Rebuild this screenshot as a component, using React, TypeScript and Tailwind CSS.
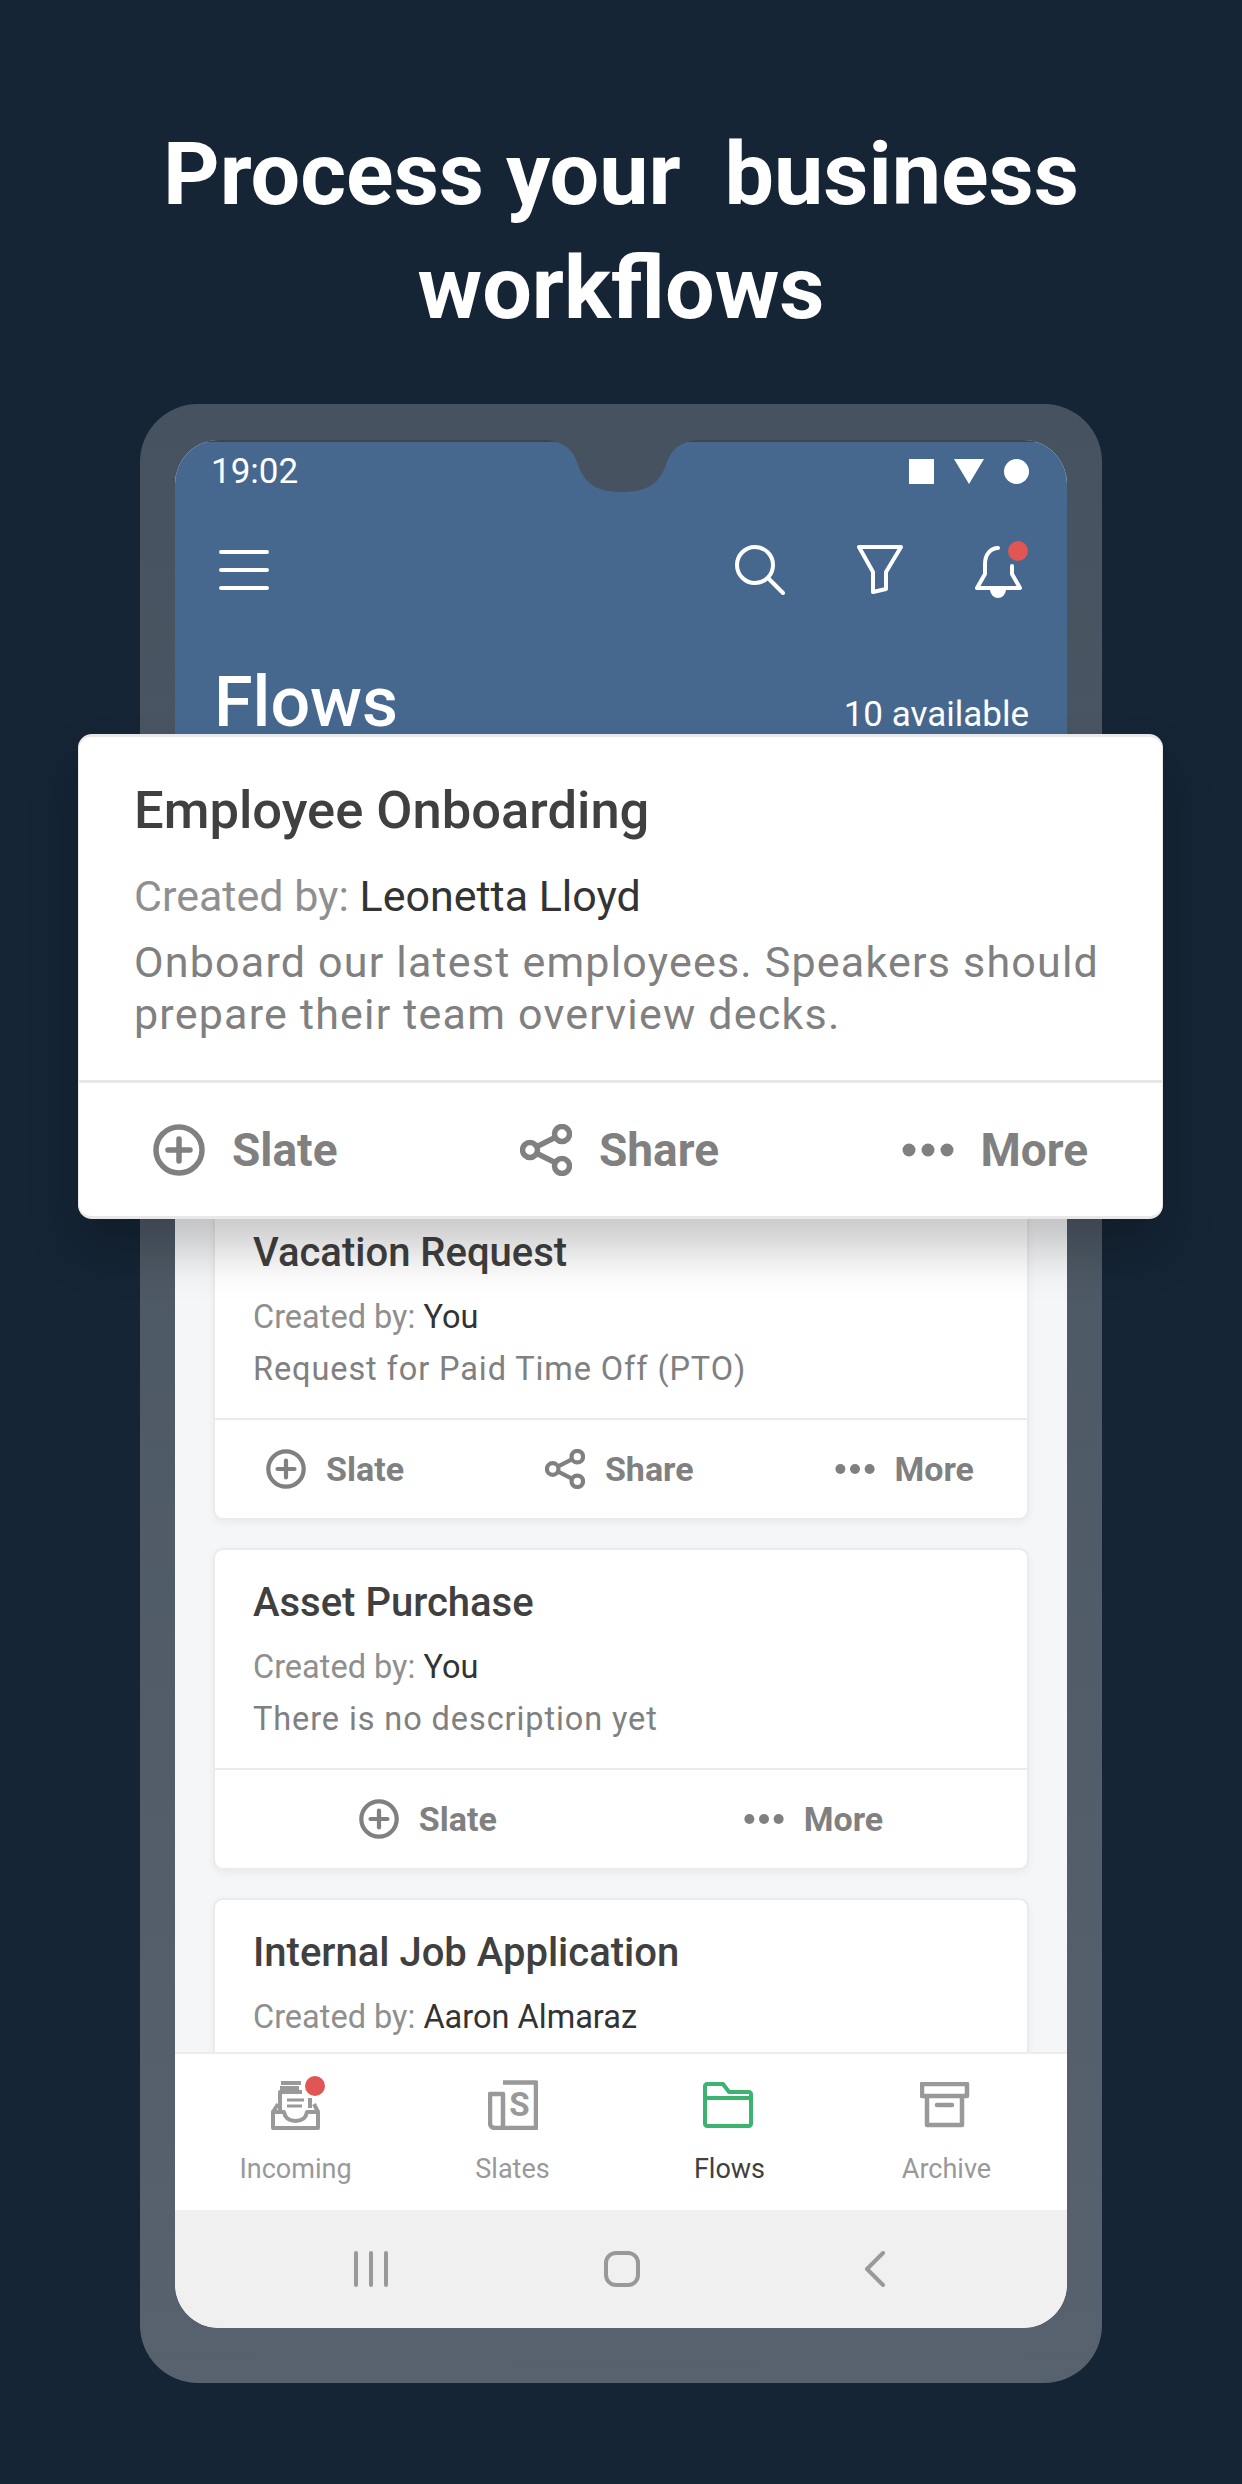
import React from 'react';

const GRAY = '#808080';

const PlusCircleIcon = ({ size }: { size: number }) => (
  <svg width={size} height={size} viewBox="0 0 52 52" fill="none" stroke={GRAY} strokeWidth="5.5" strokeLinecap="round">
    <circle cx="26" cy="26" r="23" />
    <path d="M15 26H37M26 15V37" />
  </svg>
);

const ShareIcon = ({ size }: { size: number }) => (
  <svg width={size} height={size} viewBox="0 0 52 52" fill="none" stroke={GRAY} strokeWidth="5.5">
    <circle cx="10" cy="26" r="7.5" />
    <circle cx="42" cy="10" r="7.5" />
    <circle cx="42" cy="42" r="7.5" />
    <path d="M17 22.5L35 13.5M17 29.5L35 38.5" />
  </svg>
);

const DotsIcon = ({ size }: { size: number }) => (
  <svg width={size} height={size} viewBox="0 0 52 52" fill={GRAY}>
    <circle cx="7" cy="26" r="6.5" />
    <circle cx="26" cy="26" r="6.5" />
    <circle cx="45" cy="26" r="6.5" />
  </svg>
);

const Action = ({ icon, label, big }: { icon: React.ReactNode; label: string; big?: boolean }) => (
  <div className={big ? 'flex items-center gap-[27px]' : 'flex items-center gap-[20px]'}>
    {icon}
    <span className={big ? 'text-[46px] leading-[52px] font-bold text-[#808080]' : 'text-[34px] leading-[40px] font-bold text-[#808080]'}>
      {label}
    </span>
  </div>
);

interface FlowCardProps {
  title: string;
  author: string;
  description?: string;
  actions?: 'all' | 'noShare' | 'none';
}

const FlowCard = ({ title, author, description, actions = 'all' }: FlowCardProps) => (
  <div className="h-[322px] shrink-0 rounded-[10px] bg-white border-2 border-[#ebebeb] shadow-[0_3px_8px_rgba(0,0,0,0.05)] flex flex-col">
    <div className="h-[220px] shrink-0 px-[38px] pt-[28px] border-b-2 border-[#ebebeb]">
      <div className="text-[40px] leading-[50px] font-medium text-[#404040]">{title}</div>
      <div className="mt-[19px] text-[32.5px] leading-[40px] text-[#8f8f8f]">
        Created by: <span className="text-[#333333]">{author}</span>
      </div>
      {description && (
        <div className="mt-[12px] text-[32.5px] leading-[40px] text-[#808080] tracking-[0.9px]">{description}</div>
      )}
    </div>
    {actions === 'all' && (
      <div className="flex-1 flex items-center justify-between pl-[51px] pr-[53px]">
        <Action icon={<PlusCircleIcon size={40} />} label="Slate" />
        <Action icon={<ShareIcon size={40} />} label="Share" />
        <Action icon={<DotsIcon size={40} />} label="More" />
      </div>
    )}
    {actions === 'noShare' && (
      <div className="flex-1 flex items-center justify-center gap-[247px]">
        <Action icon={<PlusCircleIcon size={40} />} label="Slate" />
        <Action icon={<DotsIcon size={40} />} label="More" />
      </div>
    )}
  </div>
);

const IncomingIcon = () => (
  <svg width="50" height="50" viewBox="0 0 50 50" fill="none" stroke="#999999" strokeWidth="4" strokeLinejoin="round" overflow="visible">
    <path d="M2 32L7 24M47 32L43 24" />
    <path d="M2 32H13C14 38 18 41 24.5 41C31 41 35 38 36 32H47V48H2Z" />
    <path d="M9 30V12H31" />
    <path d="M10 3H30M9 8H28M39 18V28" />
    <path d="M16 20H33M16 26H31" strokeWidth="3" />
    <circle cx="44" cy="6" r="10" fill="#e25555" stroke="none" />
  </svg>
);

const SlatesIcon = () => (
  <svg width="50" height="50" viewBox="0 0 50 50" fill="none" stroke="#999999" strokeWidth="4.5" strokeLinejoin="round">
    <path d="M15 2.5H48V48H7C4 48 2 46 2 43V14H15V48" />
    <text x="31.5" y="36" textAnchor="middle" fontFamily="Roboto, sans-serif" fontSize="33" fontWeight="700" fill="#999999" stroke="none">S</text>
  </svg>
);

const FlowsIcon = () => (
  <svg width="50" height="46" viewBox="0 0 50 46" fill="none" stroke="#3cb371" strokeWidth="4" strokeLinejoin="round">
    <path d="M2 4C2 3 3 2 4 2H20L26 10H46C47 10 48 11 48 12V42C48 43 47 44 46 44H4C3 44 2 43 2 42Z" />
    <path d="M2 16H48" />
  </svg>
);

const ArchiveIcon = () => (
  <svg width="50" height="46" viewBox="0 0 50 46" fill="none" stroke="#999999" strokeWidth="4.5" strokeLinejoin="round">
    <path d="M2 2H47V14H2Z" />
    <path d="M7 14V43H42V14" />
    <path d="M17 23H32" strokeLinecap="round" />
  </svg>
);

const tabs = [
  { label: 'Incoming', icon: <IncomingIcon />, iconBox: 'h-[50px] flex items-center justify-center' },
  { label: 'Slates', icon: <SlatesIcon />, iconBox: 'h-[50px] flex items-center justify-center' },
  { label: 'Flows', icon: <FlowsIcon />, iconBox: 'h-[50px] flex items-center justify-center pr-[4px]', active: true },
  { label: 'Archive', icon: <ArchiveIcon />, iconBox: 'h-[50px] flex items-center justify-center pr-[4px]' },
];

export default function App() {
  return (
    <div className="w-[1242px] h-[2484px] bg-[#152536] flex flex-col items-center overflow-hidden font-['Roboto',sans-serif]">
      <h1 className="mt-[117px] text-center text-[88px] leading-[114px] font-bold text-white whitespace-pre">
        {'Process your  business\nworkflows'}
      </h1>

      {/* Phone */}
      <div className="relative mt-[59px] w-[962px] h-[1979px] shrink-0 rounded-[58px] bg-gradient-to-b from-[#46525f] to-[#58626e] px-[35px] pt-[36px]">
        <div className="relative h-[1888px] rounded-[44px] overflow-hidden bg-[#f5f6f8] flex flex-col">
          {/* Header */}
          <div className="h-[360px] shrink-0 bg-[#46688f] border-t-2 border-[#3f4448] text-white">
            <div className="h-[58px] pl-[36px] pr-[38px] flex items-center justify-between">
              <span className="text-[35px] leading-[40px] mt-[2px]">19:02</span>
              <div className="flex items-center">
                <div className="w-[25px] h-[25px] bg-white" />
                <svg width="30" height="25" viewBox="0 0 30 25" className="ml-[20px]" fill="white">
                  <path d="M0 0H30L15 25Z" />
                </svg>
                <div className="ml-[20px] w-[25px] h-[25px] rounded-full bg-white" />
              </div>
            </div>

            <div className="mt-[40px] h-[60px] pl-[44px] pr-[38px] flex items-center justify-between">
              <svg width="50" height="42" viewBox="0 0 50 42" stroke="white" strokeWidth="4" strokeLinecap="round">
                <path d="M2 3H48M2 21H48M2 39H48" />
              </svg>
              <div className="flex items-center gap-[72px]">
                <svg width="50" height="50" viewBox="0 0 50 50" fill="none" stroke="white" strokeWidth="4" strokeLinecap="round">
                  <circle cx="20" cy="20" r="18" />
                  <path d="M33 33L48 48" />
                </svg>
                <svg width="46" height="50" viewBox="0 0 46 50" fill="none" stroke="white" strokeWidth="4" strokeLinejoin="round">
                  <path d="M2 2H44L29 27V44L16 47V27Z" />
                </svg>
                <svg width="54" height="60" viewBox="0 0 54 60" fill="none" stroke="white" strokeWidth="4" strokeLinejoin="round" strokeLinecap="round">
                  <path d="M23 8C16 8 10 14 10 24V34L2 48H45L37 34V26" />
                  <path d="M17 50C18 58 28 58 29 50" fill="white" />
                  <circle cx="43" cy="11" r="10" fill="#e25555" stroke="none" />
                </svg>
              </div>
            </div>

            <div className="mt-[64px] pl-[39px] pr-[38px] flex items-baseline justify-between">
              <span className="text-[70px] leading-[76px] font-medium">Flows</span>
              <span className="text-[35px] leading-[40px]">10 available</span>
            </div>
          </div>

          {/* List */}
          <div className="flex-1 min-h-0 overflow-hidden px-[38px] pt-[398px] flex flex-col gap-[28px]">
            <FlowCard title="Vacation Request" author="You" description="Request for Paid Time Off (PTO)" />
            <FlowCard title="Asset Purchase" author="You" description="There is no description yet" actions="noShare" />
            <FlowCard title="Internal Job Application" author="Aaron Almaraz" actions="none" />
          </div>

          {/* Tabs */}
          <div className="h-[158px] shrink-0 bg-white border-t-2 border-[#ececec] px-[12px] grid grid-cols-4 z-10">
            {tabs.map((tab) => (
              <div key={tab.label} className="flex flex-col items-center pt-[26px]">
                <div className={tab.iconBox}>{tab.icon}</div>
                <span className={tab.active ? 'mt-[23px] text-[27px] leading-[32px] text-[#404040]' : 'mt-[23px] text-[27px] leading-[32px] text-[#999999]'}>
                  {tab.label}
                </span>
              </div>
            ))}
          </div>

          {/* System nav */}
          <div className="h-[118px] shrink-0 bg-[#f0f0f0] flex items-center justify-center pr-[4px]">
            <svg width="36" height="36" viewBox="0 0 36 36" stroke="#999999" strokeWidth="4" strokeLinecap="round">
              <path d="M3 2V34M18 2V34M33 2V34" />
            </svg>
            <svg width="36" height="36" viewBox="0 0 36 36" className="ml-[215px]" fill="none" stroke="#999999" strokeWidth="4">
              <rect x="2" y="2" width="32" height="32" rx="10" />
            </svg>
            <svg width="22" height="36" viewBox="0 0 22 36" className="ml-[224px]" fill="none" stroke="#999999" strokeWidth="4" strokeLinecap="round" strokeLinejoin="round">
              <path d="M19 2L3 18L19 34" />
            </svg>
          </div>
        </div>

        {/* Camera notch */}
        <svg width="150" height="54" viewBox="0 0 150 54" className="absolute left-[407px] top-[36px]" fill="#46525f">
          <path d="M0 0H150C134 2 125 8 120 22C113 44 100 52 75 52C50 52 37 44 30 22C25 8 16 2 0 0Z" />
        </svg>
      </div>

      {/* Enlarged card lying over the phone */}
      <div className="absolute left-[78px] top-[734px] w-[1085px] h-[485px] rounded-[14px] bg-white border-t-[3px] border-x border-b-[3px] border-[#e8e8e8] shadow-[0_30px_50px_rgba(0,0,0,0.22)] flex flex-col">
        <div className="h-[346px] shrink-0 px-[55px] pt-[43px] border-b-[3px] border-[#e8e8e8]">
          <div className="text-[52.5px] leading-[60px] font-medium text-[#404040]">Employee Onboarding</div>
          <div className="mt-[30px] text-[43px] leading-[52px] text-[#8f8f8f]">
            Created by: <span className="text-[#333333]">Leonetta Lloyd</span>
          </div>
          <div className="mt-[14px] text-[43px] leading-[52px] text-[#808080] tracking-[1.2px]">
            Onboard our latest employees. Speakers should prepare their team overview decks.
          </div>
        </div>
        <div className="flex-1 flex items-center justify-between px-[74px]">
          <Action big icon={<PlusCircleIcon size={52} />} label="Slate" />
          <Action big icon={<ShareIcon size={52} />} label="Share" />
          <Action big icon={<DotsIcon size={52} />} label="More" />
        </div>
      </div>
    </div>
  );
}
